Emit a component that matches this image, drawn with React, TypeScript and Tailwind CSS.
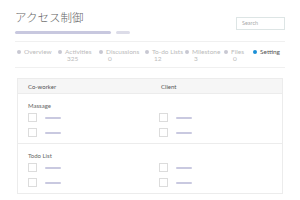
import React from 'react';

const tabs = [
  { label: 'Overview', count: '', w: 'w-[41px]' },
  { label: 'Activities', count: '325', w: 'w-[41px]' },
  { label: 'Discussions', count: '0', w: 'w-[46px]' },
  { label: 'To-do Lists', count: '12', w: 'w-[40px]' },
  { label: 'Milestone', count: '3', w: 'w-[39px]' },
  { label: 'Files', count: '0', w: 'w-[29px]' },
];

const Box: React.FC = () => (
  <div className="flex items-center gap-[8px]">
    <div className="w-[9px] h-[9px] border border-[#dcdcdc] bg-white" />
    <div className="w-[16px] h-[2px] bg-[#c9c9e0] rounded" />
  </div>
);

const Section: React.FC<{ title: string; last?: boolean }> = ({ title, last }) => (
  <div className={`flex px-[10px] pt-[8px] pb-[6px] ${last ? '' : 'border-b border-[#ececec]'}`}>
    <div className="w-[131px]">
      <div className="text-[6px] leading-[8px] text-[#666] mb-[3px]">{title}</div>
      <div className="flex flex-col gap-[6px]">
        <Box />
        <Box />
      </div>
    </div>
    <div className="flex flex-col gap-[6px] pt-[11px]">
      <Box />
      <Box />
    </div>
  </div>
);

export default function App() {
  return (
    <div
      className="w-[300px] h-[200px] bg-white overflow-hidden px-[15px] pt-[9px]"
      style={{ fontFamily: '"Lato", "Noto Sans CJK JP", sans-serif' }}
    >
      <div className="flex justify-between">
        <div>
          <div className="text-[11.5px] leading-[18px] font-light text-[#666]">アクセス制御</div>
          <div className="flex items-center gap-[5px] mt-[4px]">
            <div className="w-[96px] h-[3px] bg-[#c8c8df] rounded" />
            <div className="w-[14px] h-[3px] bg-[#dcdce8] rounded" />
          </div>
        </div>
        <div className="w-[49px] h-[13px] mt-[8px] border border-[#dde5e5] flex items-center px-[5px] text-[5.5px] text-[#aaa]">
          Search
        </div>
      </div>

      <div className="mt-[7px] border-t border-b border-[#f0f0f0] h-[27px] flex pt-[6px] pl-[2px] text-[6.5px] leading-[7px] text-[#bbb]">
        {tabs.map((t) => (
          <div key={t.label} className={`flex gap-[3px] shrink-0 ${t.w}`}>
            <div className="w-[4px] h-[4px] rounded-full bg-[#c8c8d2] mt-[1.5px] shrink-0" />
            <div className="flex flex-col">
              <span className="whitespace-nowrap">{t.label}</span>
              {t.count && <span className="pl-[2px]">{t.count}</span>}
            </div>
          </div>
        ))}
        <div className="flex gap-[3px]">
          <div className="w-[4px] h-[4px] rounded-full bg-[#1a8fd6] mt-[1.5px]" />
          <span className="text-[#555]">Setting</span>
        </div>
      </div>

      <div className="mt-[10px] mx-[2px] border border-[#ececec]">
        <div className="flex h-[15px] items-center bg-[#f6f6f6] border-b border-[#ececec] px-[10px] text-[6px] text-[#555]">
          <span className="w-[133px]">Co-worker</span>
          <span>Client</span>
        </div>
        <Section title="Massage" />
        <Section title="Todo List" last />
      </div>
    </div>
  );
}
